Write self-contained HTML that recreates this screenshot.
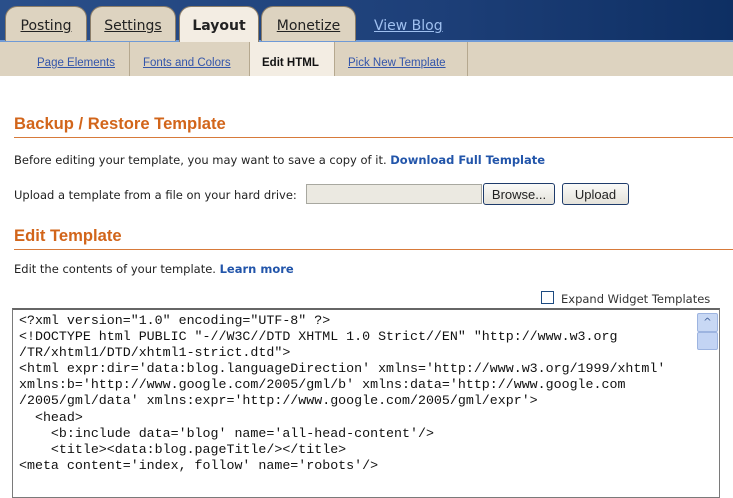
<!DOCTYPE html>
<html><head><meta charset="utf-8"><style>
body{margin:0;width:733px;height:491px;overflow:hidden;background:#fff;font-family:"DejaVu Sans",sans-serif;font-size:11.5px;color:#222;position:relative}
.a{position:absolute}
.top{left:0;top:0;width:733px;height:40px;background:linear-gradient(90deg,#2a4f8a,#1d3f78 60%,#0e2f63);border-bottom:2px solid #6f9ad6}
.tab{top:6px;height:35px;background:#ddd3c0;border:1px solid #8b7d68;border-bottom:none;border-radius:12px 12px 0 0;box-sizing:border-box;text-align:center;font-size:14px;line-height:38px;color:#222;text-decoration:underline}
.sub{left:0;top:42px;width:733px;height:34px;background:#ddd3c0}
.sl{top:42px;height:34px;line-height:42px;font-size:11.5px;color:#3355aa;text-decoration:underline;font-family:"Liberation Sans",sans-serif}
.sep{top:42px;width:1px;height:34px;background:#b5a88f}
h2{position:absolute;margin:0;left:14px;font-size:16.6px;color:#d2651a;font-weight:bold;font-family:"Liberation Sans",sans-serif}
.hr{left:14px;width:719px;height:1px;background:#d77a3a}
.t{left:14px}
a{color:#2255aa;font-weight:bold}
.btn{top:183px;height:22px;border:1px solid #1e3b6b;border-radius:3px;background:linear-gradient(#fafaf8,#e4e2da);font-size:13px;text-align:center;line-height:21px;box-sizing:border-box;font-family:"Liberation Sans",sans-serif}
pre{position:absolute;margin:0;left:19px;top:313px;font-family:"Liberation Mono",monospace;font-size:13.3px;line-height:16.1px;color:#111}
</style></head><body>
<div class="a top"></div>
<div class="a tab" style="left:5px;width:82px">Posting</div>
<div class="a tab" style="left:90px;width:86px">Settings</div>
<div class="a tab" style="left:179px;width:80px;background:#f3ede3;text-decoration:none;font-weight:bold;height:37px">Layout</div>
<div class="a tab" style="left:261px;width:95px">Monetize</div>
<div class="a" style="left:374px;top:18px;font-size:14px;color:#9fc0f0;text-decoration:underline">View Blog</div>
<div class="a sub"></div>
<div class="a" style="left:249px;top:42px;width:85px;height:34px;background:#f3ede3"></div>
<div class="a sep" style="left:129px"></div>
<div class="a sep" style="left:249px"></div>
<div class="a sep" style="left:334px"></div>
<div class="a sep" style="left:467px"></div>
<div class="a sl" style="left:37px">Page Elements</div>
<div class="a sl" style="left:143px">Fonts and Colors</div>
<div class="a sl" style="left:262px;color:#111;text-decoration:none;font-weight:bold">Edit HTML</div>
<div class="a sl" style="left:348px">Pick New Template</div>
<h2 style="top:114px">Backup / Restore Template</h2>
<div class="a hr" style="top:137px"></div>
<div class="a t" style="top:153px">Before editing your template, you may want to save a copy of it. <a>Download Full Template</a></div>
<div class="a t" style="top:188px">Upload a template from a file on your hard drive:</div>
<div class="a" style="left:306px;top:184px;width:176px;height:20px;background:#ebe9e1;border:1px solid #a8a8a0;box-sizing:border-box"></div>
<div class="a btn" style="left:483px;width:72px">Browse...</div>
<div class="a btn" style="left:562px;width:67px">Upload</div>
<h2 style="top:226px">Edit Template</h2>
<div class="a hr" style="top:249px"></div>
<div class="a t" style="top:262px">Edit the contents of your template. <a>Learn more</a></div>
<div class="a" style="left:541px;top:291px;width:11px;height:11px;border:1px solid #1c4a80;background:#fff"></div>
<div class="a" style="left:561px;top:292px;color:#333">Expand Widget Templates</div>
<div class="a" style="left:12px;top:308px;width:708px;height:190px;border:1px solid #7a7a7a;border-top:2px solid #666;box-sizing:border-box;background:#fff"></div>
<div class="a" style="left:697px;top:313px;width:19px;height:17px;background:#c8d8f4;border:1px solid #9db4e0;border-radius:2px;text-align:center;font-size:10px;color:#3a5a96;line-height:17px">^</div>
<div class="a" style="left:697px;top:332px;width:19px;height:16px;background:#c3d4f4;border:1px solid #9db4e0;border-radius:2px"></div>
<pre>&lt;?xml version="1.0" encoding="UTF-8" ?&gt;
&lt;!DOCTYPE html PUBLIC "-//W3C//DTD XHTML 1.0 Strict//EN" "http://www.w3.org
/TR/xhtml1/DTD/xhtml1-strict.dtd"&gt;
&lt;html expr:dir='data:blog.languageDirection' xmlns='http://www.w3.org/1999/xhtml'
xmlns:b='http://www.google.com/2005/gml/b' xmlns:data='http://www.google.com
/2005/gml/data' xmlns:expr='http://www.google.com/2005/gml/expr'&gt;
  &lt;head&gt;
    &lt;b:include data='blog' name='all-head-content'/&gt;
    &lt;title&gt;&lt;data:blog.pageTitle/&gt;&lt;/title&gt;
&lt;meta content='index, follow' name='robots'/&gt;</pre>
</body></html>
